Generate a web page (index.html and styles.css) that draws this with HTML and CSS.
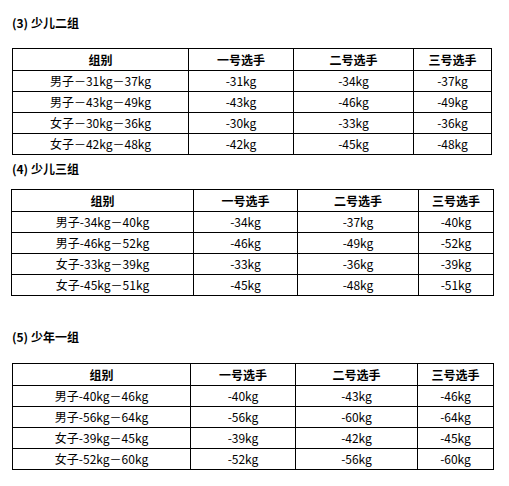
FILE: index.html
```html
<!DOCTYPE html>
<html>
<head>
<meta charset="utf-8">
<link rel="stylesheet" href="styles.css">
</head>
<body>
<div class="page">
  <h3 class="title t1">(3) 少儿二组</h3>
  <table class="grid g1">
    <colgroup><col class="c1"><col class="c2"><col class="c3"><col class="c4"></colgroup>
    <tr class="head"><th>组别</th><th>一号选手</th><th>二号选手</th><th>三号选手</th></tr>
    <tr><td>男子－31kg－37kg</td><td>-31kg</td><td>-34kg</td><td>-37kg</td></tr>
    <tr><td>男子－43kg－49kg</td><td>-43kg</td><td>-46kg</td><td>-49kg</td></tr>
    <tr><td>女子－30kg－36kg</td><td>-30kg</td><td>-33kg</td><td>-36kg</td></tr>
    <tr><td>女子－42kg－48kg</td><td>-42kg</td><td>-45kg</td><td>-48kg</td></tr>
  </table>

  <h3 class="title t2">(4) 少儿三组</h3>
  <table class="grid g2">
    <colgroup><col class="c1"><col class="c2"><col class="c3"><col class="c4"></colgroup>
    <tr class="head"><th>组别</th><th>一号选手</th><th>二号选手</th><th>三号选手</th></tr>
    <tr><td>男子-34kg－40kg</td><td>-34kg</td><td>-37kg</td><td>-40kg</td></tr>
    <tr><td>男子-46kg－52kg</td><td>-46kg</td><td>-49kg</td><td>-52kg</td></tr>
    <tr><td>女子-33kg－39kg</td><td>-33kg</td><td>-36kg</td><td>-39kg</td></tr>
    <tr><td>女子-45kg－51kg</td><td>-45kg</td><td>-48kg</td><td>-51kg</td></tr>
  </table>

  <h3 class="title t3">(5) 少年一组</h3>
  <table class="grid g3">
    <colgroup><col class="c1"><col class="c2"><col class="c3"><col class="c4"></colgroup>
    <tr class="head"><th>组别</th><th>一号选手</th><th>二号选手</th><th>三号选手</th></tr>
    <tr><td>男子-40kg－46kg</td><td>-40kg</td><td>-43kg</td><td>-46kg</td></tr>
    <tr><td>男子-56kg－64kg</td><td>-56kg</td><td>-60kg</td><td>-64kg</td></tr>
    <tr><td>女子-39kg－45kg</td><td>-39kg</td><td>-42kg</td><td>-45kg</td></tr>
    <tr><td>女子-52kg－60kg</td><td>-52kg</td><td>-56kg</td><td>-60kg</td></tr>
  </table>
</div>
</body>
</html>
```

FILE: styles.css
```css
html, body {
  margin: 0;
  padding: 0;
  background: #ffffff;
}
body {
  font-family: "Noto Sans CJK SC", "DejaVu Sans", sans-serif;
  font-size: 12px;
  color: #000000;
}
.page {
  padding-left: 12px;
}
.title {
  margin: 0;
  font-size: 12px;
  font-weight: bold;
  line-height: 20px;
  height: 20px;
}
.t1 { padding-top: 13px; margin-bottom: 15px; }
.t2 { margin-top: 4px; margin-bottom: 10px; }
.t3 { margin-top: 31px; margin-bottom: 16px; }

.grid {
  border-collapse: collapse;
  table-layout: fixed;
}
.grid th, .grid td {
  border: 1px solid #000000;
  padding: 0;
  text-align: center;
  vertical-align: middle;
  line-height: 14px;
  white-space: nowrap;
}
.grid td { height: 20px; }
.grid th { height: 21px; font-weight: bold; }

.g1 { width: 479px; }
.g1 .c1 { width: 176px; }
.g1 .c2 { width: 105px; }
.g1 .c3 { width: 120px; }
.g1 .c4 { width: 78px; }

.g2 { width: 482px; margin-left: -1px; }
.g2 .c1 { width: 182px; }
.g2 .c2 { width: 104px; }
.g2 .c3 { width: 121px; }
.g2 .c4 { width: 75px; }

.g3 { width: 481px; }
.g3 .c1 { width: 178px; }
.g3 .c2 { width: 105px; }
.g3 .c3 { width: 122px; }
.g3 .c4 { width: 76px; }
```
